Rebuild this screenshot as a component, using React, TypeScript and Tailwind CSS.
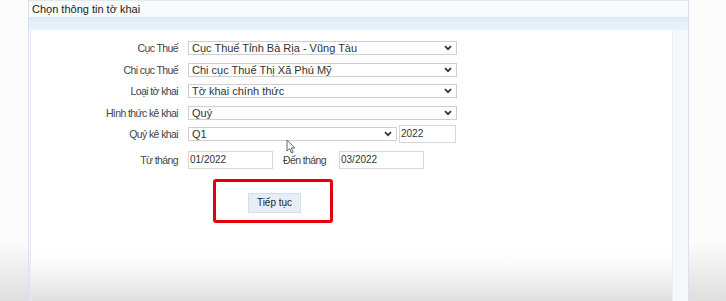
import React from "react";

function Chevron() {
  return (
    <svg width="8" height="6" viewBox="0 0 8 6" className="shrink-0">
      <path d="M1 1.2 L4 4.2 L7 1.2" fill="none" stroke="#333" strokeWidth="1.7" />
    </svg>
  );
}

function Select({ value, w }: { value: string; w: string }) {
  return (
    <div
      className={`${w} h-[14px] border border-[#cfcfcf] bg-white flex items-center justify-between pl-[3px] pr-[4px] text-[11px] text-[#333] leading-none`}
    >
      <span>{value}</span>
      <Chevron />
    </div>
  );
}

function Row({
  label,
  children,
  className,
}: {
  label: string;
  children: React.ReactNode;
  className?: string;
}) {
  return (
    <div className={`flex items-center ${className ?? ""}`}>
      <div className="w-[148px] pr-[1px] text-right text-[10.5px] tracking-[-0.6px] text-[#444] leading-none shrink-0">
        {label}
      </div>
      <div className="ml-[9px] flex items-center">{children}</div>
    </div>
  );
}

export default function App() {
  return (
    <div className="relative w-[726px] h-[301px] overflow-hidden font-['Liberation_Sans',Arial,sans-serif] bg-[linear-gradient(to_bottom,#fcfcfc_0%,#fcfcfc_80%,#dedede_100%)]">
      <div className="ml-[28px] w-[661px] h-full border-l border-r border-[#d6e2ee] flex flex-col">
        <div className="h-[17px] border-t border-[#e6e9ec] bg-[#f8fafb] pl-[3px] flex items-center text-[11px] text-[#222] leading-none">
          Chọn thông tin tờ khai
        </div>
        <div className="h-[13px] bg-[linear-gradient(to_bottom,#deecf7,#ebf3fa)] border-t border-[#d8e6f2]" />
        <div className="flex flex-1">
          <div className="w-[642px] ml-[1px] bg-[linear-gradient(to_bottom,#ffffff_0%,#ffffff_78%,rgba(255,255,255,0)_100%)] border-l border-[#e4ecf4] flex flex-col">
            <Row label="Cục Thuế" className="mt-[11px]">
              <Select value="Cục Thuế Tỉnh Bà Rịa - Vũng Tàu" w="w-[269px]" />
            </Row>
            <Row label="Chi cục Thuế" className="mt-[8px]">
              <Select value="Chi cục Thuế Thị Xã Phú Mỹ" w="w-[269px]" />
            </Row>
            <Row label="Loại tờ khai" className="mt-[7px]">
              <Select value="Tờ khai chính thức" w="w-[269px]" />
            </Row>
            <Row label="Hình thức kê khai" className="mt-[8px]">
              <Select value="Quý" w="w-[269px]" />
            </Row>
            <Row label="Quý kê khai" className="mt-[5px] h-[18px]">
              <Select value="Q1" w="w-[209px]" />
              <div className="ml-[2px] w-[57px] h-[18px] border border-[#d6d6d6] bg-white flex items-center pl-[1px] text-[10px] text-[#333] leading-none">
                2022
              </div>
            </Row>
            <Row label="Từ tháng" className="mt-[8px] h-[18px]">
              <div className="w-[85px] h-[18px] border border-[#d6d6d6] bg-white flex items-center pl-[1px] text-[10px] text-[#333] leading-none">
                01/2022
              </div>
              <div className="ml-[10px] w-[45px] text-[10.5px] tracking-[-0.6px] text-[#444] leading-none">
                Đến tháng
              </div>
              <div className="ml-[11px] w-[85px] h-[18px] border border-[#d6d6d6] bg-white flex items-center pl-[1px] text-[10px] text-[#333] leading-none">
                03/2022
              </div>
            </Row>
            <div className="mt-[10px] ml-[182px] w-[120px] h-[44px] border-[3px] border-[#e5000b] rounded-[3px] flex items-center justify-center pt-[4px] pl-[3px]">
              <div className="w-[53px] h-[20px] bg-[#e6eff8] border border-[#d3dfea] flex items-center justify-center text-[10px] text-[#222] leading-none">
                Tiếp tục
              </div>
            </div>
          </div>
          <div className="flex-1 bg-[#f6f9fb] border-l border-[#e8eef4]" />
        </div>
      </div>
      <svg
        className="absolute left-[286px] top-[139px]"
        width="10"
        height="15"
        viewBox="0 0 10 15"
      >
        <path
          d="M1 1 L1 12 L3.6 9.6 L5.6 14 L7.2 13.3 L5.3 9 L8.8 9 Z"
          fill="#fff"
          stroke="#555"
          strokeWidth="0.9"
        />
      </svg>
    </div>
  );
}
